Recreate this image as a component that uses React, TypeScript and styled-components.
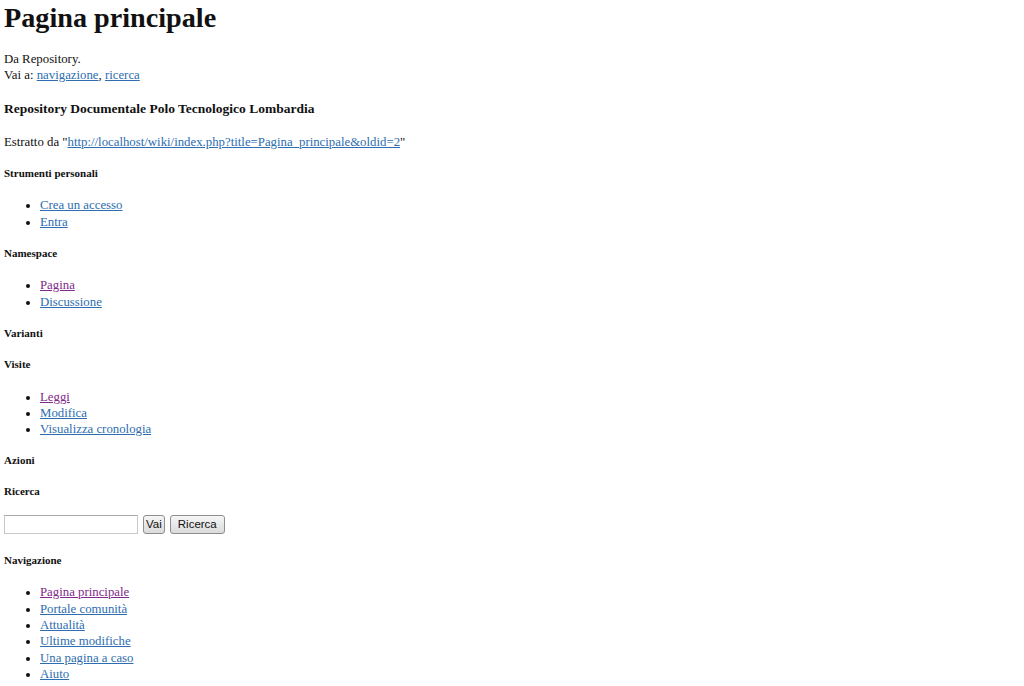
import React from "react";
import styled, { createGlobalStyle } from "styled-components";

const Global = createGlobalStyle`
  html, body { margin: 0; padding: 0; background: #fff; }
  body {
    font-family: "Liberation Serif", "Times New Roman", serif;
    font-size: 12.8px;
    line-height: 16.3px;
    color: #111;
  }
`;

const Page = styled.div`
  padding: 0 4px;
`;

const Title = styled.h1`
  margin: 0;
  padding-top: 2px;
  font-size: 28.2px;
  line-height: 32px;
  font-weight: bold;
  color: #111;
`;

const Sub = styled.div`
  margin-top: 17px;
`;

const Link = styled.a<{ $visited?: boolean }>`
  color: ${(p) => (p.$visited ? "#7f2a8a" : "#2d6db0")};
  text-decoration: underline;
`;

const SiteTitle = styled.h3`
  margin: 16px 0 16px;
  font-size: 13.5px;
  line-height: 18px;
  font-weight: bold;
`;

const Para = styled.div``;

const Heading = styled.h5`
  margin: 16px 0 17px;
  font-size: 11px;
  line-height: 14px;
  font-weight: bold;
`;

const List = styled.ul`
  margin: 17.5px 0 15.7px;
  padding-left: 36px;
  list-style: disc;
`;

const Item = styled.li``;

const Form = styled.form`
  display: flex;
  align-items: center;
  gap: 5px;
  margin: 17px 0 18.5px;
  height: 19px;
`;

const Input = styled.input`
  box-sizing: border-box;
  width: 134px;
  height: 19px;
  border: 1px solid #c9c9c9;
  border-top-color: #aaa;
  padding: 0 2px;
  margin: 0;
`;

const Button = styled.button<{ $pad: number }>`
  box-sizing: border-box;
  height: 19px;
  padding: 0 ${(p) => p.$pad}px;
  margin: 0;
  font-family: "Liberation Sans", Arial, sans-serif;
  font-size: 11.5px;
  line-height: 17px;
  color: #111;
  border: 1px solid #8e8e8e;
  border-radius: 3px;
  background: linear-gradient(#f6f6f6, #dadada);
`;

type L = { text: string; visited?: boolean };

const Portlet = ({ title, items }: { title: string; items?: L[] }) => (
  <>
    <Heading>{title}</Heading>
    {items && items.length > 0 && (
      <List>
        {items.map((i) => (
          <Item key={i.text}>
            <Link href="#" $visited={i.visited}>
              {i.text}
            </Link>
          </Item>
        ))}
      </List>
    )}
  </>
);

export default function App() {
  return (
    <>
      <Global />
      <Page>
        <Title>Pagina principale</Title>
        <Sub>
          Da Repository.
          <br />
          Vai a: <Link href="#">navigazione</Link>, <Link href="#">ricerca</Link>
        </Sub>
        <SiteTitle>Repository Documentale Polo Tecnologico Lombardia</SiteTitle>
        <Para>
          Estratto da "
          <Link href="#">http://localhost/wiki/index.php?title=Pagina_principale&amp;oldid=2</Link>"
        </Para>
        <Portlet
          title="Strumenti personali"
          items={[{ text: "Crea un accesso" }, { text: "Entra" }]}
        />
        <Portlet
          title="Namespace"
          items={[{ text: "Pagina", visited: true }, { text: "Discussione" }]}
        />
        <Portlet title="Varianti" />
        <Portlet
          title="Visite"
          items={[
            { text: "Leggi", visited: true },
            { text: "Modifica" },
            { text: "Visualizza cronologia" },
          ]}
        />
        <Portlet title="Azioni" />
        <Heading>Ricerca</Heading>
        <Form onSubmit={(e) => e.preventDefault()}>
          <Input type="search" />
          <Button type="button" $pad={2}>
            Vai
          </Button>
          <Button type="button" $pad={7}>
            Ricerca
          </Button>
        </Form>
        <Portlet
          title="Navigazione"
          items={[
            { text: "Pagina principale", visited: true },
            { text: "Portale comunità" },
            { text: "Attualità" },
            { text: "Ultime modifiche" },
            { text: "Una pagina a caso" },
            { text: "Aiuto" },
          ]}
        />
      </Page>
    </>
  );
}
